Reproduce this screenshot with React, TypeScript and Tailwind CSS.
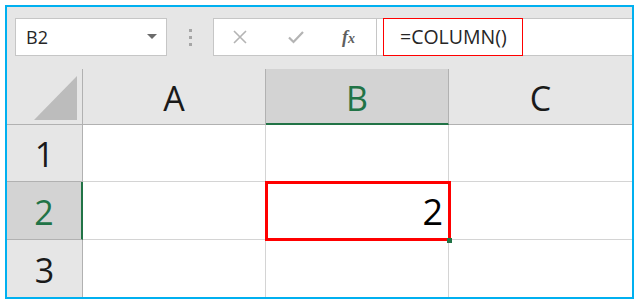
export default function App() {
  const font = { fontFamily: '"Open Sans", "Liberation Sans", sans-serif' };
  return (
    <div className="w-[639px] h-[306px] bg-white pt-[5px] pl-[5px]" style={font}>
      <div className="w-[629px] h-[294px] border-2 border-[#00b0f0] bg-[#e6e6e6] flex flex-col overflow-hidden">
        {/* Formula bar */}
        <div className="flex items-stretch h-[39px] mt-[11px]">
          <div className="ml-[8px] w-[152px] bg-white border border-[#c6c6c6] flex items-center justify-between pl-[10px] pr-[9px]">
            <span className="text-[18px] text-[#262626] leading-none">B2</span>
            <svg width="10" height="6" viewBox="0 0 10 6">
              <path d="M0 0 L10 0 L5 5 Z" fill="#6b6b6b" />
            </svg>
          </div>
          <div className="w-[46px] flex flex-col items-center justify-center gap-[4px]">
            <div className="w-[3px] h-[3px] bg-[#a6a6a6]" />
            <div className="w-[3px] h-[3px] bg-[#a6a6a6]" />
            <div className="w-[3px] h-[3px] bg-[#a6a6a6]" />
          </div>
          <div className="w-[164px] bg-white border border-[#c6c6c6] flex items-center pl-[19px]">
            <svg width="14" height="14" viewBox="0 0 14 14">
              <path d="M1 1 L13 13 M13 1 L1 13" stroke="#b4b4b4" strokeWidth="1.6" />
            </svg>
            <svg width="16" height="14" viewBox="0 0 16 14" className="ml-[41px]">
              <path d="M1 7.5 L5.5 12 L15 2" stroke="#b4b4b4" strokeWidth="2.2" fill="none" />
            </svg>
            <span
              className="ml-[38px] text-[18px] italic font-bold text-[#5f5f5f] leading-none"
              style={{ fontFamily: '"Liberation Serif", serif' }}
            >
              f<span className="text-[14px]">x</span>
            </span>
          </div>
          <div className="flex-1 bg-white border-y border-[#c6c6c6] pl-[6px] flex items-stretch">
            <div className="w-[140px] border border-[#ff0000] flex items-center pl-[16px] -my-px">
              <span className="text-[19.5px] text-[#262626] leading-none">=COLUMN()</span>
            </div>
          </div>
        </div>

        {/* Grid */}
        <div className="mt-[13px] grid grid-cols-[76px_183px_183px_183px] grid-rows-[56px_57px_58px_57px]">
          <div className="relative bg-[#e6e6e6] border-r border-b border-[#b1b1b1]">
            <svg width="43" height="44" viewBox="0 0 43 44" className="absolute right-[5px] bottom-[4px]">
              <path d="M43 0 L43 44 L0 44 Z" fill="#bcbcbc" />
            </svg>
          </div>
          <div className="bg-[#e6e6e6] border-r border-b border-[#b1b1b1] flex items-center justify-center pt-[4px] text-[34px] text-[#1a1a1a]">A</div>
          <div className="bg-[#d3d3d3] border-r border-[#b1b1b1] border-b-2 border-b-[#217346] flex items-center justify-center pt-[4px] text-[34px] text-[#217346]">B</div>
          <div className="bg-[#e6e6e6] border-b border-[#b1b1b1] flex items-center justify-center pt-[4px] text-[34px] text-[#1a1a1a]">C</div>

          <div className="bg-[#e6e6e6] border-r border-b border-[#b1b1b1] flex items-center justify-center pt-[3px] text-[34px] text-[#1a1a1a]">1</div>
          <div className="bg-white border-r border-b border-[#d4d4d4]" />
          <div className="bg-white border-r border-b border-[#d4d4d4]" />
          <div className="bg-white border-b border-[#d4d4d4]" />

          <div className="bg-[#d3d3d3] border-b border-[#b1b1b1] border-r-2 border-r-[#217346] flex items-center justify-center pt-[3px] text-[34px] text-[#217346]">2</div>
          <div className="bg-white border-r border-b border-[#d4d4d4]" />
          <div className="relative bg-white">
            <div className="absolute -left-[1px] -top-[1px] w-[186px] h-[60px] border-[3px] border-[#ff0000] flex items-center justify-end pr-[5px] pt-[2px] text-[36px] text-black">
              2
            </div>
            <div className="absolute -right-[3px] -bottom-[3px] w-[5px] h-[5px] bg-[#217346]" />
          </div>
          <div className="bg-white border-b border-[#d4d4d4]" />

          <div className="bg-[#e6e6e6] border-r border-[#b1b1b1] flex items-center justify-center pt-[3px] text-[34px] text-[#1a1a1a]">3</div>
          <div className="bg-white border-r border-[#d4d4d4]" />
          <div className="bg-white border-r border-[#d4d4d4]" />
          <div className="bg-white" />
        </div>
      </div>
    </div>
  );
}
